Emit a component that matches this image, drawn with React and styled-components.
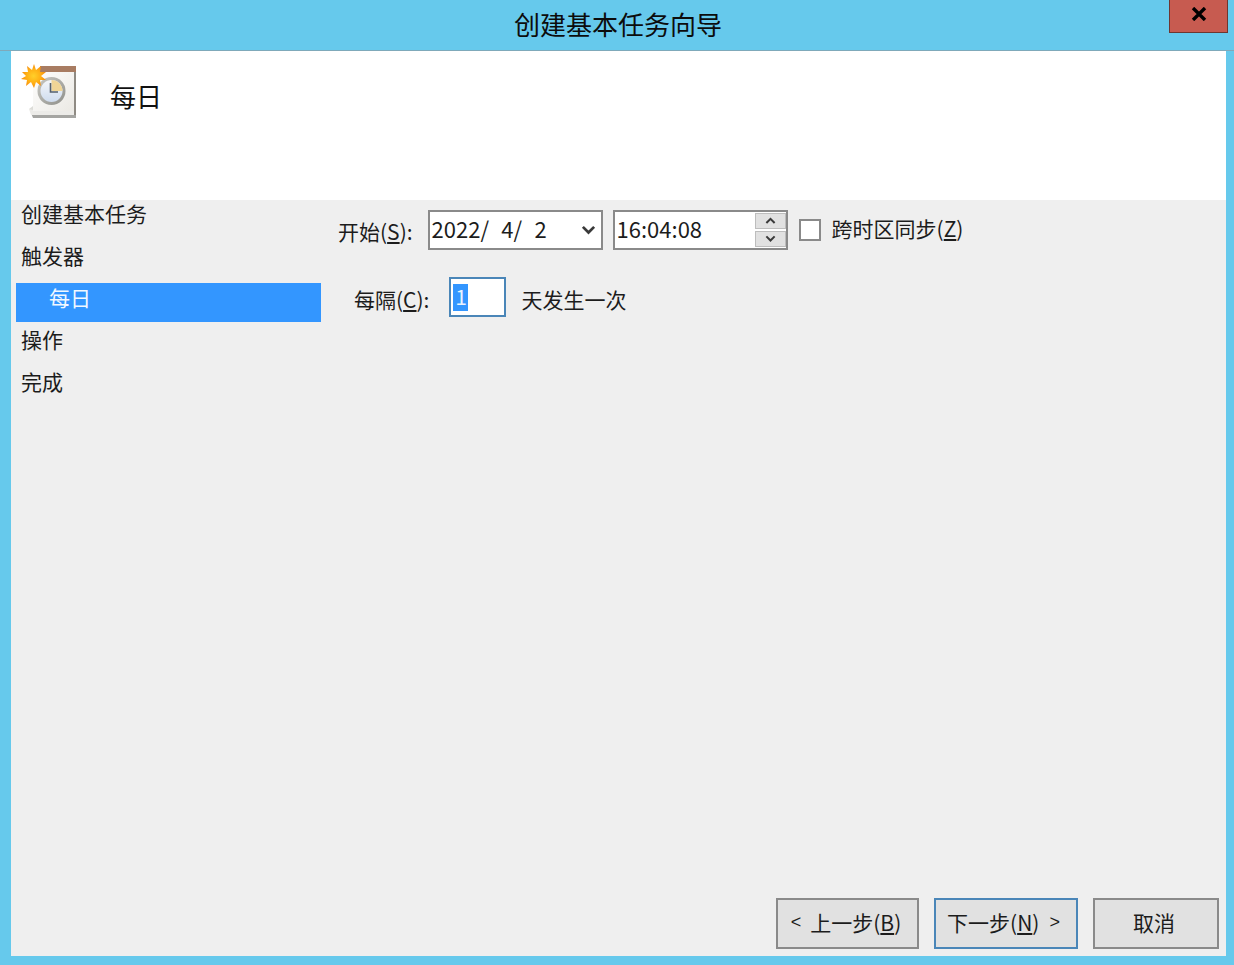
import React from "react";
import styled, { createGlobalStyle } from "styled-components";

const GlobalStyle = createGlobalStyle`
    html, body {
        margin: 0;
        padding: 0;
    }
    body {
        background: #66c9ec;
        font-family: "Noto Sans CJK SC", "Liberation Sans", sans-serif;
    }
`;

const steps = [
    { label: "创建基本任务" },
    { label: "触发器" },
    { label: "每日", active: true },
    { label: "操作" },
    { label: "完成" },
];

const ClockIcon = () => (
    <svg width="60" height="56" viewBox="0 0 60 56">
        <defs>
            <radialGradient id="sun" cx="0.5" cy="0.5" r="0.5">
                <stop offset="0" stopColor="#ffd02a" />
                <stop offset="0.6" stopColor="#ffae14" />
                <stop offset="1" stopColor="#f58a0c" />
            </radialGradient>
            <linearGradient id="page" x1="0" y1="0" x2="1" y2="1">
                <stop offset="0" stopColor="#ffffff" />
                <stop offset="1" stopColor="#ebe9e4" />
            </linearGradient>
            <linearGradient id="ring" x1="0" y1="0" x2="1" y2="1">
                <stop offset="0" stopColor="#c9c9c4" />
                <stop offset="1" stopColor="#8f8f8a" />
            </linearGradient>
            <linearGradient id="face" x1="0" y1="0" x2="0" y2="1">
                <stop offset="0" stopColor="#f4f6fa" />
                <stop offset="1" stopColor="#cfdcee" />
            </linearGradient>
        </defs>
        <path d="M10 49 L55 49 L55 54 L12 54 Z" fill="#a5a5a2" />
        <path d="M8 45 L53 45 L53 51 L10 51 Z" fill="#ecebe8" />
        <path d="M8 45 L12 42 L12 46 Z" fill="#dcdcd8" />
        <rect x="12" y="3" width="41" height="44" fill="url(#page)" />
        <rect x="53" y="3" width="2" height="48" fill="#8f8b84" />
        <rect x="19" y="2" width="36" height="6" fill="#a87c62" />
        <circle cx="30.5" cy="27" r="14" fill="url(#ring)" />
        <circle cx="30.5" cy="27" r="11" fill="url(#face)" />
        <path d="M30.5 16 A11 11 0 0 1 41.5 27 L30.5 27 Z" fill="#f0d596" />
        <path d="M29.5 19 L29.5 28 L37 28" fill="none" stroke="#56606c" strokeWidth="1.6" />
        <path
            d="M13 0 L15 6 L20 2 L19 8 L25 8 L20 12 L25 16 L19 16 L20 22 L15 18 L13 24 L10 18 L5 22 L6 16 L0 15 L5 12 L1 8 L7 8 L6 2 L11 6 Z"
            fill="url(#sun)"
        />
    </svg>
);

const Chevron = ({ up, size = 12 }) => (
    <svg width={size} height={size * 0.67} viewBox="0 0 12 8">
        <path
            d={up ? "M1.5 6.5 L6 2 L10.5 6.5" : "M1.5 1.5 L6 6 L10.5 1.5"}
            fill="none"
            stroke="#3a3a3a"
            strokeWidth="2.2"
        />
    </svg>
);

const App = () => {
    return (
        <Window>
            <GlobalStyle />
            <TitleBar>
                <Title>创建基本任务向导</Title>
                <CloseButton>
                    <svg width="16" height="14" viewBox="0 0 16 14">
                        <path d="M2 1 L14 13 M14 1 L2 13" stroke="#000" strokeWidth="3.4" />
                    </svg>
                </CloseButton>
            </TitleBar>
            <Content>
                <Header>
                    <ClockIcon />
                    <HeaderTitle>每日</HeaderTitle>
                </Header>
                <Body>
                    <Main>
                        <Sidebar>
                            {steps.map((step) => (
                                <Step key={step.label} $active={step.active}>
                                    {step.label}
                                </Step>
                            ))}
                        </Sidebar>
                        <Form>
                            <FormRow>
                                <StartLabel>开始(<u>S</u>):</StartLabel>
                                <DateField>
                                    <FieldText>2022/&nbsp;&nbsp;4/&nbsp;&nbsp;2</FieldText>
                                    <Chevron size={15} />
                                </DateField>
                                <TimeField>
                                    <FieldText>16:04:08</FieldText>
                                    <Spinner>
                                        <SpinButton><Chevron up size={11} /></SpinButton>
                                        <SpinButton><Chevron size={11} /></SpinButton>
                                    </Spinner>
                                </TimeField>
                                <Checkbox />
                                <SyncLabel>跨时区同步(<u>Z</u>)</SyncLabel>
                            </FormRow>
                            <FormRow $indent={16}>
                                <Label>每隔(<u>C</u>):</Label>
                                <NumberField>
                                    <Selected>1</Selected>
                                </NumberField>
                                <UnitLabel>天发生一次</UnitLabel>
                            </FormRow>
                        </Form>
                    </Main>
                    <Footer>
                        <Button $width={143} $shift={3}>
                            <Arrow $right={9}>&lt;</Arrow>
                            <span>上一步(<u>B</u>)</span>
                        </Button>
                        <Button $width={144} $shift={5} $primary>
                            <span>下一步(<u>N</u>)</span>
                            <Arrow $left={10}>&gt;</Arrow>
                        </Button>
                        <Button $width={126} $shift={4}>取消</Button>
                    </Footer>
                </Body>
            </Content>
        </Window>
    );
};

export default App;

const Window = styled.div`
    width: 1234px;
    height: 965px;
    display: flex;
    flex-direction: column;
    background: #66c9ec;
    overflow: hidden;
    color: #111;
`;

const TitleBar = styled.div`
    height: 51px;
    flex: none;
    position: relative;
    display: flex;
    justify-content: center;
    padding: 5px 0 0 2px;
    box-sizing: border-box;
    border-bottom: 1px solid #7fa9ba;
`;

const Title = styled.div`
    font-size: 26px;
    line-height: 38px;
    color: #0c0c0c;
`;

const CloseButton = styled.div`
    position: absolute;
    top: -1px;
    left: 1169px;
    width: 59px;
    height: 34px;
    box-sizing: border-box;
    padding-bottom: 4px;
    background: #c75b50;
    border: 1px solid #6e3630;
    display: flex;
    align-items: center;
    justify-content: center;
`;

const Content = styled.div`
    margin: 0 8px 9px 11px;
    flex: 1;
    display: flex;
    flex-direction: column;
    min-height: 0;
`;

const Header = styled.div`
    height: 149px;
    flex: none;
    background: #fff;
    display: flex;
    align-items: flex-start;
    padding: 13px 0 0 10px;
    box-sizing: border-box;
`;

const HeaderTitle = styled.div`
    font-size: 26px;
    line-height: 38px;
    margin: 13px 0 0 29px;
    color: #111;
`;

const Body = styled.div`
    flex: 1;
    background: #efefef;
    display: flex;
    flex-direction: column;
    min-height: 0;
`;

const Main = styled.div`
    flex: 1;
    display: flex;
    min-height: 0;
`;

const Sidebar = styled.div`
    width: 305px;
    margin-left: 5px;
    flex: none;
`;

const Step = styled.div`
    height: ${(p) => (p.$active ? "39px" : "42px")};
    margin: ${(p) => (p.$active ? "-1px 0 4px" : "0")};
    padding-left: ${(p) => (p.$active ? "33px" : "5px")};
    background: ${(p) => (p.$active ? "#3396ff" : "transparent")};
    color: ${(p) => (p.$active ? "#f2f8ff" : "#1c1c1c")};
    font-size: 21px;
    line-height: ${(p) => (p.$active ? "28px" : "26px")};
`;

const Form = styled.div`
    flex: 1;
    padding: 10px 0 0 17px;
    display: flex;
    flex-direction: column;
    gap: 27px;
`;

const FormRow = styled.div`
    display: flex;
    align-items: center;
    height: 40px;
    padding-left: ${(p) => p.$indent || 0}px;
`;

const Label = styled.span`
    font-size: 21px;
    line-height: 30px;
    color: #1c1c1c;
    white-space: nowrap;
    margin-top: 4px;
`;

const StartLabel = styled(Label)`
    margin-top: 2px;
`;

const UnitLabel = styled(Label)`
    margin-left: 15px;
`;

const DateField = styled.div`
    width: 175px;
    height: 40px;
    box-sizing: border-box;
    margin-left: 15px;
    background: #fff;
    border: 2px solid #8a8a8a;
    display: flex;
    align-items: center;
    justify-content: space-between;
    padding: 0 5px 0 2px;
`;

const TimeField = styled(DateField)`
    margin-left: 10px;
    padding: 0 0 0 2px;
`;

const FieldText = styled.span`
    font-size: 22px;
    line-height: 30px;
    word-spacing: 1.2px;
    margin-top: -4px;
    color: #1c1c1c;
    white-space: nowrap;
`;

const Spinner = styled.div`
    width: 31px;
    display: flex;
    flex-direction: column;
    gap: 2px;
`;

const SpinButton = styled.div`
    height: 16px;
    background: #e1e1e1;
    border: 1px solid #bdbdbd;
    box-sizing: border-box;
    display: flex;
    align-items: center;
    justify-content: center;
`;

const Checkbox = styled.div`
    width: 22px;
    height: 22px;
    margin-left: 11px;
    box-sizing: border-box;
    background: #fff;
    border: 2px solid #8a8a8a;
`;

const SyncLabel = styled.span`
    font-size: 21px;
    line-height: 30px;
    color: #1c1c1c;
    margin: -5px 0 0 11px;
    white-space: nowrap;
`;

const NumberField = styled.div`
    width: 57px;
    height: 40px;
    box-sizing: border-box;
    margin-left: 20px;
    background: #fff;
    border: 2px solid #4a86b8;
    padding: 5px 0 0 2px;
`;

const Selected = styled.div`
    width: 15px;
    height: 27px;
    background: #3396ff;
    color: #eaf4ff;
    font-size: 21px;
    line-height: 25px;
    text-align: center;
`;

const Footer = styled.div`
    flex: none;
    display: flex;
    justify-content: flex-end;
    gap: 15px;
    padding: 0 7px 7px 0;
`;

const Button = styled.div`
    width: ${(p) => p.$width}px;
    height: 51px;
    box-sizing: border-box;
    padding-right: ${(p) => p.$shift || 0}px;
    padding-bottom: 4px;
    background: #e1e1e1;
    border: 2px solid ${(p) => (p.$primary ? "#4a86b8" : "#8a8a8a")};
    display: flex;
    align-items: center;
    justify-content: center;
    font-size: 21px;
    line-height: 40px;
    color: #1c1c1c;
    white-space: nowrap;
`;

const Arrow = styled.span`
    font-family: "Liberation Sans", sans-serif;
    font-size: 18px;
    margin-left: ${(p) => p.$left || 0}px;
    margin-right: ${(p) => p.$right || 0}px;
`;
